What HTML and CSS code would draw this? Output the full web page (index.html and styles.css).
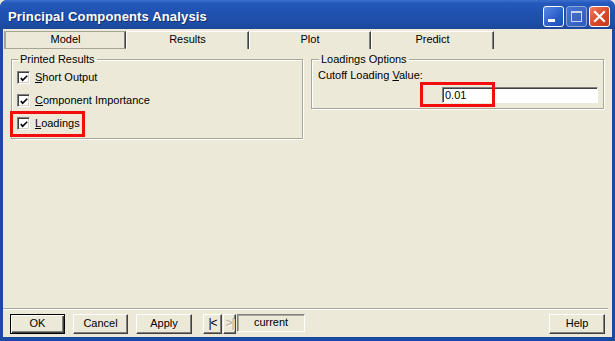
FILE: index.html
```html
<!DOCTYPE html>
<html lang="en">
<head>
    <meta charset="UTF-8">
    <title>Principal Components Analysis</title>
    <link rel="stylesheet" href="styles.css">
</head>
<body>

<div class="window">
    <div class="titlebar">
        <span class="title">Principal Components Analysis</span>
        <div class="caption-buttons">
            <span class="cap-btn cap-min"><svg width="19" height="19" viewBox="0 0 19 19"><rect x="4" y="12" width="7" height="3" fill="#fff"/></svg></span>
            <span class="cap-btn cap-max"><svg width="19" height="19" viewBox="0 0 19 19"><rect x="4.5" y="4.5" width="10" height="10" fill="none" stroke="#c8d6f0" stroke-width="1"/><rect x="4" y="4" width="11" height="2" fill="#c8d6f0"/></svg></span>
            <span class="cap-btn cap-close"><svg width="19" height="19" viewBox="0 0 19 19"><path d="M5 5 L14 14 M14 5 L5 14" stroke="#fff" stroke-width="2.2" stroke-linecap="square"/></svg></span>
        </div>
    </div>

    <div class="client">
        <div class="tabs">
            <div class="tab tab-active">Model</div>
            <div class="tab tab-wide">Results</div>
            <div class="tab">Plot</div>
            <div class="tab tab-wide">Predict</div>
        </div>

        <div class="panes">
            <fieldset class="group">
                <legend>Printed Results</legend>
                <label class="check"><span class="box"><svg width="11" height="11" viewBox="0 0 11 11"><path d="M2 5 L4 7.5 L9 2.5" fill="none" stroke="#000" stroke-width="1.8"/></svg></span><span><u>S</u>hort Output</span></label>
                <label class="check"><span class="box"><svg width="11" height="11" viewBox="0 0 11 11"><path d="M2 5 L4 7.5 L9 2.5" fill="none" stroke="#000" stroke-width="1.8"/></svg></span><span><u>C</u>omponent Importance</span></label>
                <label class="check"><span class="box"><svg width="11" height="11" viewBox="0 0 11 11"><path d="M2 5 L4 7.5 L9 2.5" fill="none" stroke="#000" stroke-width="1.8"/></svg></span><span><u>L</u>oadings</span></label>
            </fieldset>

            <fieldset class="group group-loadings">
                <legend>Loadings Options</legend>
                <div class="field-label">Cutoff Loading <u>V</u>alue:</div>
                <div class="field-row"><div class="textbox">0.01</div></div>
            </fieldset>
        </div>

        <div class="spacer"></div>
        <div class="separator"></div>

        <div class="actions">
            <button class="btn btn-default">OK</button>
            <button class="btn">Cancel</button>
            <button class="btn btn-apply">Apply</button>
            <div class="nav">
                <button class="btn nav-btn nav-first">|&lt;</button>
                <button class="btn nav-btn nav-last" disabled>&gt;|</button>
                <div class="current">current</div>
            </div>
            <button class="btn btn-help">Help</button>
        </div>
    </div>

    <div class="mark mark-loadings"></div>
    <div class="mark mark-cutoff"></div>
</div>

</body>
</html>
```

FILE: styles.css
```css
body {
    margin: 0;
    font-family: "Liberation Sans", Arial, sans-serif;
    font-size: 11px;
    color: #000;
    background: #ece9d8;
}
.window {
    position: relative;
    width: 615px;
    height: 341px;
    box-sizing: border-box;
    display: flex;
    flex-direction: column;
    background: #1c4aa2;
    border-radius: 7px 7px 0 0;
    overflow: hidden;
}
.titlebar {
    height: 29px;
    flex: none;
    display: flex;
    align-items: center;
    padding: 0 5px 0 8px;
    background: linear-gradient(#3d6fd0 0, #2559bd 3px, #1f52b0 12px, #1d4ea9 22px, #1b4899 29px);
}
.title {
    flex: 1;
    color: #fff;
    font-weight: bold;
    font-size: 13px;
    letter-spacing: 0.15px;
    padding-top: 3px;
    text-shadow: 1px 1px 0 #10306a;
}
.caption-buttons {
    display: flex;
    gap: 2px;
    padding-top: 3px;
}
.cap-btn {
    width: 21px;
    height: 21px;
    box-sizing: border-box;
    border: 1px solid #fff;
    border-radius: 3px;
    display: flex;
    align-items: center;
    justify-content: center;
}
.cap-min {
    background: linear-gradient(135deg, #5a8ae6, #2a5ec8 60%, #1e4fb4);
}
.cap-max {
    border-color: #8aa6dc;
    background: linear-gradient(135deg, #4a76cc, #2e5cb8);
}
.cap-close {
    background: linear-gradient(135deg, #f08060, #d8472a 55%, #c23c1e);
}
.client {
    flex: 1;
    display: flex;
    flex-direction: column;
    margin: 0 3px 4px 3px;
    background: #ece9d8;
}
.tabs {
    display: flex;
    margin-top: 2px;
    padding-left: 1px;
}
.tab {
    width: 122px;
    height: 18px;
    box-sizing: border-box;
    text-align: center;
    line-height: 15px;
    border-top: 1px solid #fff;
    border-left: 1px solid #fff;
    border-right: 1px solid #404040;
    box-shadow: inset -1px 0 #808080;
}
.tab-wide {
    width: 123px;
}
.tab-active {
    border-top-color: #a7a596;
    border-left: 2px solid #a7a596;
    border-bottom: 1px solid #a7a596;
    line-height: 14px;
}
.panes {
    display: grid;
    grid-template-columns: 292px 293px;
    align-items: start;
    column-gap: 8px;
    margin-top: 4px;
    padding: 0 8px;
}
.group {
    box-sizing: border-box;
    width: 100%;
    margin: 0;
    min-width: 0;
    padding: 0 0 3px 5px;
    border: 1px solid #a8a798;
    box-shadow: 1px 1px 0 #fff, inset 1px 1px 0 #fff;
}
.group legend {
    padding: 0 2px;
    margin-left: 1px;
    line-height: 13px;
}
.check {
    display: flex;
    align-items: center;
    height: 23px;
    gap: 5px;
}
.check span:last-child {
    margin-top: -2px;
}
.box {
    width: 13px;
    height: 13px;
    box-sizing: border-box;
    background: #fff;
    border: 1px solid;
    border-color: #808080 #fff #fff #808080;
    box-shadow: inset 1px 1px #404040, inset -1px -1px #d4d0c8;
    display: flex;
    align-items: center;
    justify-content: center;
}
.box svg {
    margin: 1px 0 0 1px;
}
.group-loadings {
    padding: 0 5px 5px 6px;
}
.field-label {
    line-height: 18px;
}
.field-row {
    display: flex;
    justify-content: flex-end;
    margin-top: 3px;
}
.textbox {
    width: 156px;
    height: 16px;
    box-sizing: border-box;
    background: #fff;
    border: 1px solid;
    border-color: #808080 #fff #fff #808080;
    box-shadow: inset 1px 1px #404040;
    padding-left: 2px;
    line-height: 14px;
}
.spacer {
    flex: 1;
}
.separator {
    height: 1px;
    margin-right: 4px;
    background: #aca899;
    border-bottom: 1px solid #fff;
}
.actions {
    display: flex;
    align-items: flex-start;
    margin: 4px 0 3px;
    padding: 0 7px;
    height: 20px;
}
.btn {
    width: 55px;
    height: 20px;
    box-sizing: border-box;
    margin: 0 8px 0 0;
    padding: 0 0 2px;
    font-family: "Liberation Sans", Arial, sans-serif;
    font-size: 11px;
    color: #000;
    background: #ece9d8;
    border: 1px solid;
    border-color: #fff #404040 #404040 #fff;
    box-shadow: inset -1px -1px #808080;
    border-radius: 0;
}
.btn-apply {
    width: 56px;
}
.btn-default {
    border: 1px solid #000;
    box-shadow: inset 1px 1px #fff, inset -1px -1px #404040, inset -2px -2px #808080;
}
.nav {
    display: flex;
    margin-left: 3px;
}
.nav-btn {
    margin: 0 1px 0 0;
    font-size: 12px;
    letter-spacing: -1px;
}
.nav-first {
    width: 19px;
}
.nav-last {
    width: 13px;
    color: #aca899;
    text-shadow: 1px 1px 0 #fff;
}
.current {
    width: 68px;
    height: 18px;
    box-sizing: border-box;
    border: 1px solid;
    border-color: #808080 #fff #fff #808080;
    box-shadow: inset 1px 1px #aca899;
    text-align: center;
    line-height: 14px;
}
.btn-help {
    margin: 0 0 0 auto;
    width: 56px;
}
.mark {
    position: absolute;
    box-sizing: border-box;
    border: 3px solid #f40d0d;
}
.mark-loadings {
    left: 10px;
    top: 111px;
    width: 75px;
    height: 26px;
}
.mark-cutoff {
    left: 420px;
    top: 82px;
    width: 75px;
    height: 25px;
}
```
